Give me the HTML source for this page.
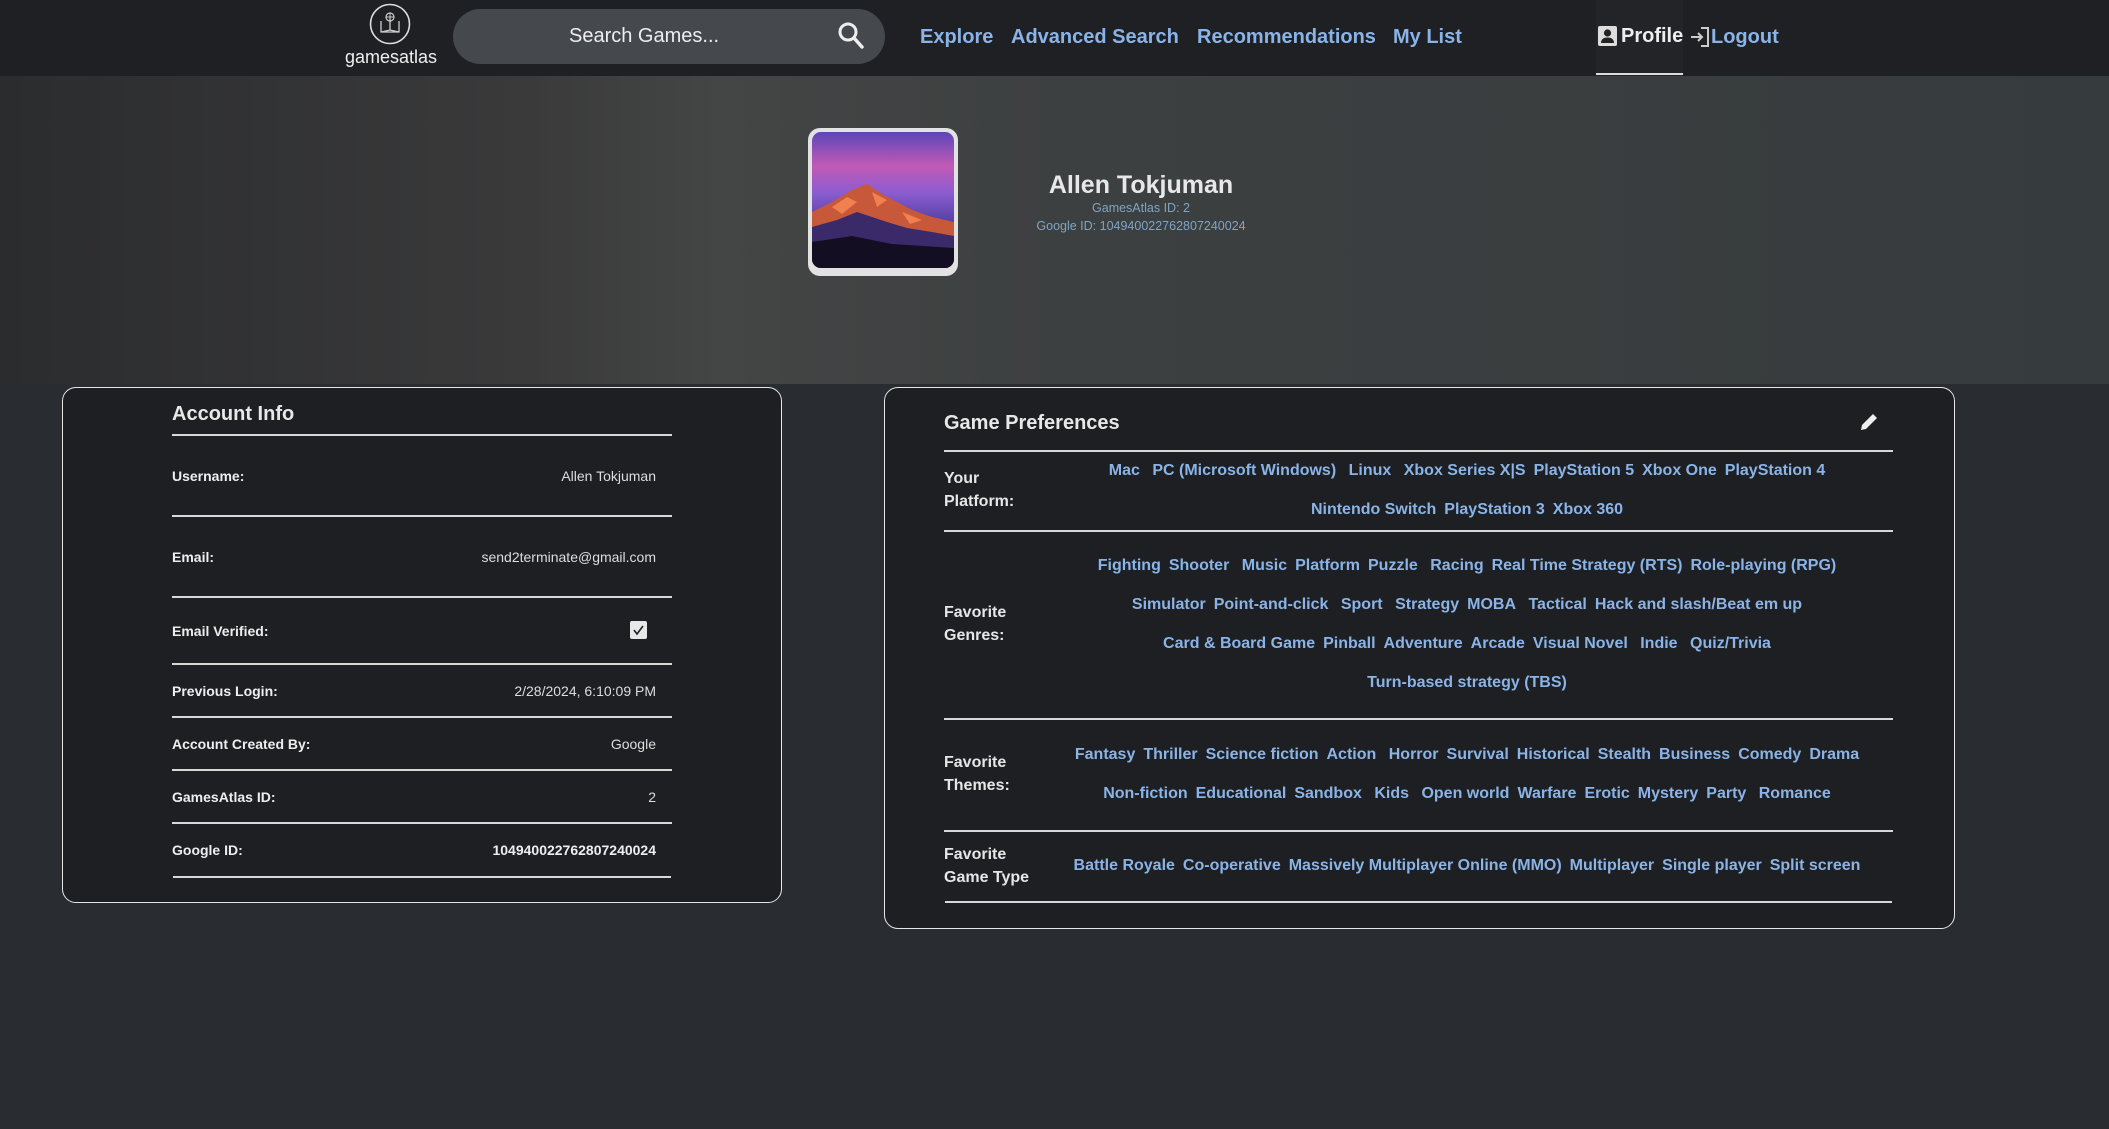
<!DOCTYPE html>
<html><head><meta charset="utf-8"><style>
*{margin:0;padding:0;box-sizing:border-box}
body{width:2109px;height:1129px;background:#292d31;font-family:"Liberation Sans",Arial,sans-serif;position:relative;overflow:hidden;color:#e8e8e8}
.a{position:absolute}
.nav{left:0;top:0;width:2109px;height:76px;background:#1e2024}
.link{color:#8ab4e8;font-weight:bold;font-size:20px;top:26px}
.hero{left:0;top:76px;width:2109px;height:308px;background:linear-gradient(90deg,#2b2c2e 0%,#3a3a3b 25%,#444545 34%,#3d4041 50%,#363b3d 100%)}
.card{background:#1e1f22;border:1.5px solid #e6e6e6;border-radius:14px}
.lbl{font-size:14px;font-weight:bold;color:#eee}
.val{font-size:14px;color:#ddd;text-align:right}
.hr{height:1.5px;background:#d8d8d8}
.tags{left:1040px;width:854px;text-align:center;font-size:16px;font-weight:bold;color:#8ab4e8;white-space:nowrap}
.tags span{margin:0 4px}
.pl{left:944px;font-size:16px;font-weight:bold;color:#e6e6e6;line-height:23px}
</style></head><body>
<div class="a nav"></div>
<svg class="a" style="left:368px;top:2px" width="44" height="44" viewBox="0 0 44 44"><circle cx="22" cy="22" r="19.5" fill="none" stroke="#ddd" stroke-width="1.6"/><path d="M13 19v11h18V19M13 30l9-2 9 2M22 16v12" fill="none" stroke="#ccc" stroke-width="1.3"/><circle cx="22" cy="15" r="4" fill="none" stroke="#ccc" stroke-width="1.2"/><path d="M18 15h8M22 11v8" stroke="#ccc" stroke-width="1"/></svg>
<div class="a" style="left:345px;top:47px;font-size:18px;color:#eee">gamesatlas</div>
<div class="a" style="left:453px;top:9px;width:432px;height:55px;border-radius:28px;background:#45484c"></div>
<div class="a" style="left:569px;top:25px;font-size:20px;color:#eee">Search Games...</div>
<svg class="a" style="left:837px;top:21px" width="28" height="30" viewBox="0 0 28 30"><circle cx="11" cy="11" r="8" fill="none" stroke="#eee" stroke-width="3"/><path d="M17 17l8 9" stroke="#eee" stroke-width="3.5" stroke-linecap="round"/></svg>
<div class="a link" style="left:920px">Explore</div>
<div class="a link" style="left:1011px">Advanced Search</div>
<div class="a link" style="left:1197px">Recommendations</div>
<div class="a link" style="left:1393px">My List</div>
<div class="a" style="left:1596px;top:0;width:87px;height:76px;background:#222428"></div>
<div class="a" style="left:1596px;top:73px;width:87px;height:2px;background:#ddd"></div>
<svg class="a" style="left:1598px;top:26px" width="19" height="20" viewBox="0 0 19 20"><rect x="0" y="0" width="19" height="20" rx="2" fill="#ddd"/><circle cx="9.5" cy="7" r="3.6" fill="#222"/><path d="M3 17c0-4 3-5.5 6.5-5.5S16 13 16 17z" fill="#222"/></svg>
<div class="a" style="left:1621px;top:25px;font-size:20px;font-weight:bold;color:#eee">Profile</div>
<svg class="a" style="left:1689px;top:26px" width="22" height="22" viewBox="0 0 22 22"><path d="M2 11h11M9 7l4 4-4 4M12 2h7v18h-7" fill="none" stroke="#ccc" stroke-width="2"/></svg>
<div class="a link" style="left:1711px;top:26px">Logout</div>

<div class="a hero"></div>
<div class="a" style="left:808px;top:128px;width:150px;height:148px;border-radius:12px;background:#e2e2e2"></div>
<div class="a" style="left:812px;top:132px;width:142px;height:136px;border-radius:9px;overflow:hidden;background:linear-gradient(180deg,#5b46b8 0%,#c25ab6 25%,#8a5cd0 45%,#4b3c9a 70%,#1a1428 100%)">
<svg width="142" height="136" viewBox="0 0 142 136"><path d="M0 80L20 70 40 58 55 52 70 62 85 70 100 78 120 85 142 90V136H0z" fill="#c8583a"/><path d="M0 95L25 88 45 80 60 85 75 90 95 96 120 100 142 104V136H0z" fill="#3a2a6a"/><path d="M20 75L35 65 45 70 30 82zM60 60L75 68 65 75zM90 80L110 88 98 92z" fill="#f08050"/><path d="M0 110L40 104 80 112 142 116V136H0z" fill="#140e22"/></svg></div>
<div class="a" style="left:1000px;top:171px;width:282px;text-align:center;font-size:25px;font-weight:bold;color:#e8e8e8">Allen Tokjuman</div>
<div class="a" style="left:1000px;top:201px;width:282px;text-align:center;font-size:12.5px;color:#7fa4c4">GamesAtlas ID: 2</div>
<div class="a" style="left:990px;top:219px;width:302px;text-align:center;font-size:12.5px;color:#7fa4c4">Google ID: 104940022762807240024</div>

<div class="a card" style="left:62px;top:387px;width:720px;height:516px"></div>
<div class="a" style="left:172px;top:403px;font-size:20px;font-weight:bold;color:#e8e8e8">Account Info</div>
<div class="a hr" style="left:172px;top:434px;width:500px"></div>
<div class="a lbl" style="left:172px;top:468px">Username:</div><div class="a val" style="left:400px;width:256px;top:468px">Allen Tokjuman</div>
<div class="a hr" style="left:172px;top:515px;width:500px"></div>
<div class="a lbl" style="left:172px;top:549px">Email:</div><div class="a val" style="left:400px;width:256px;top:549px">send2terminate@gmail.com</div>
<div class="a hr" style="left:172px;top:596px;width:500px"></div>
<div class="a lbl" style="left:172px;top:623px">Email Verified:</div>
<div class="a" style="left:630px;top:621px;width:17px;height:18px;border-radius:2px;background:#e8e8e8"></div>
<svg class="a" style="left:630px;top:621px" width="17" height="18"><path d="M4 9l3 4 6-8" fill="none" stroke="#222" stroke-width="1.6"/></svg>
<div class="a hr" style="left:172px;top:663px;width:500px"></div>
<div class="a lbl" style="left:172px;top:683px">Previous Login:</div><div class="a val" style="left:400px;width:256px;top:683px">2/28/2024, 6:10:09 PM</div>
<div class="a hr" style="left:172px;top:716px;width:500px"></div>
<div class="a lbl" style="left:172px;top:736px">Account Created By:</div><div class="a val" style="left:400px;width:256px;top:736px">Google</div>
<div class="a hr" style="left:172px;top:769px;width:500px"></div>
<div class="a lbl" style="left:172px;top:789px">GamesAtlas ID:</div><div class="a val" style="left:400px;width:256px;top:789px">2</div>
<div class="a hr" style="left:172px;top:822px;width:500px"></div>
<div class="a lbl" style="left:172px;top:842px">Google ID:</div><div class="a val" style="left:400px;width:256px;top:842px;font-weight:bold;color:#eee">104940022762807240024</div>
<div class="a hr" style="left:173px;top:876px;width:498px"></div>

<div class="a card" style="left:884px;top:387px;width:1071px;height:542px"></div>
<div class="a" style="left:944px;top:412px;font-size:20px;font-weight:bold;color:#e8e8e8">Game Preferences</div>
<svg class="a" style="left:1858px;top:411px" width="22" height="22" viewBox="0 0 22 22"><path d="M3 19l1-5L15 3l4 4L8 18z" fill="#eee"/></svg>
<div class="a hr" style="left:944px;top:450px;width:949px"></div>
<div class="a pl" style="top:467px">Your<br>Platform:</div>
<div class="a tags" style="top:462px"><span>Mac</span> <span>PC (Microsoft Windows)</span> <span>Linux</span> <span>Xbox Series X|S</span><span>PlayStation 5</span><span>Xbox One</span><span>PlayStation 4</span></div>
<div class="a tags" style="top:501px"><span>Nintendo Switch</span><span>PlayStation 3</span><span>Xbox 360</span></div>
<div class="a hr" style="left:944px;top:530px;width:949px"></div>
<div class="a pl" style="top:601px">Favorite<br>Genres:</div>
<div class="a tags" style="top:557px"><span>Fighting</span><span>Shooter</span> <span>Music</span><span>Platform</span><span>Puzzle</span> <span>Racing</span><span>Real Time Strategy (RTS)</span><span>Role-playing (RPG)</span></div>
<div class="a tags" style="top:596px"><span>Simulator</span><span>Point-and-click</span> <span>Sport</span> <span>Strategy</span><span>MOBA</span> <span>Tactical</span><span>Hack and slash/Beat em up</span></div>
<div class="a tags" style="top:635px"><span>Card &amp; Board Game</span><span>Pinball</span><span>Adventure</span><span>Arcade</span><span>Visual Novel</span> <span>Indie</span> <span>Quiz/Trivia</span></div>
<div class="a tags" style="top:674px"><span>Turn-based strategy (TBS)</span></div>
<div class="a hr" style="left:944px;top:718px;width:949px"></div>
<div class="a pl" style="top:751px">Favorite<br>Themes:</div>
<div class="a tags" style="top:746px"><span>Fantasy</span><span>Thriller</span><span>Science fiction</span><span>Action</span> <span>Horror</span><span>Survival</span><span>Historical</span><span>Stealth</span><span>Business</span><span>Comedy</span><span>Drama</span></div>
<div class="a tags" style="top:785px"><span>Non-fiction</span><span>Educational</span><span>Sandbox</span> <span>Kids</span> <span>Open world</span><span>Warfare</span><span>Erotic</span><span>Mystery</span><span>Party</span> <span>Romance</span></div>
<div class="a hr" style="left:944px;top:830px;width:949px"></div>
<div class="a pl" style="top:843px">Favorite<br>Game Type</div>
<div class="a tags" style="top:857px"><span>Battle Royale</span><span>Co-operative</span><span>Massively Multiplayer Online (MMO)</span><span>Multiplayer</span><span>Single player</span><span>Split screen</span></div>
<div class="a hr" style="left:945px;top:901px;width:947px"></div>
</body></html>
